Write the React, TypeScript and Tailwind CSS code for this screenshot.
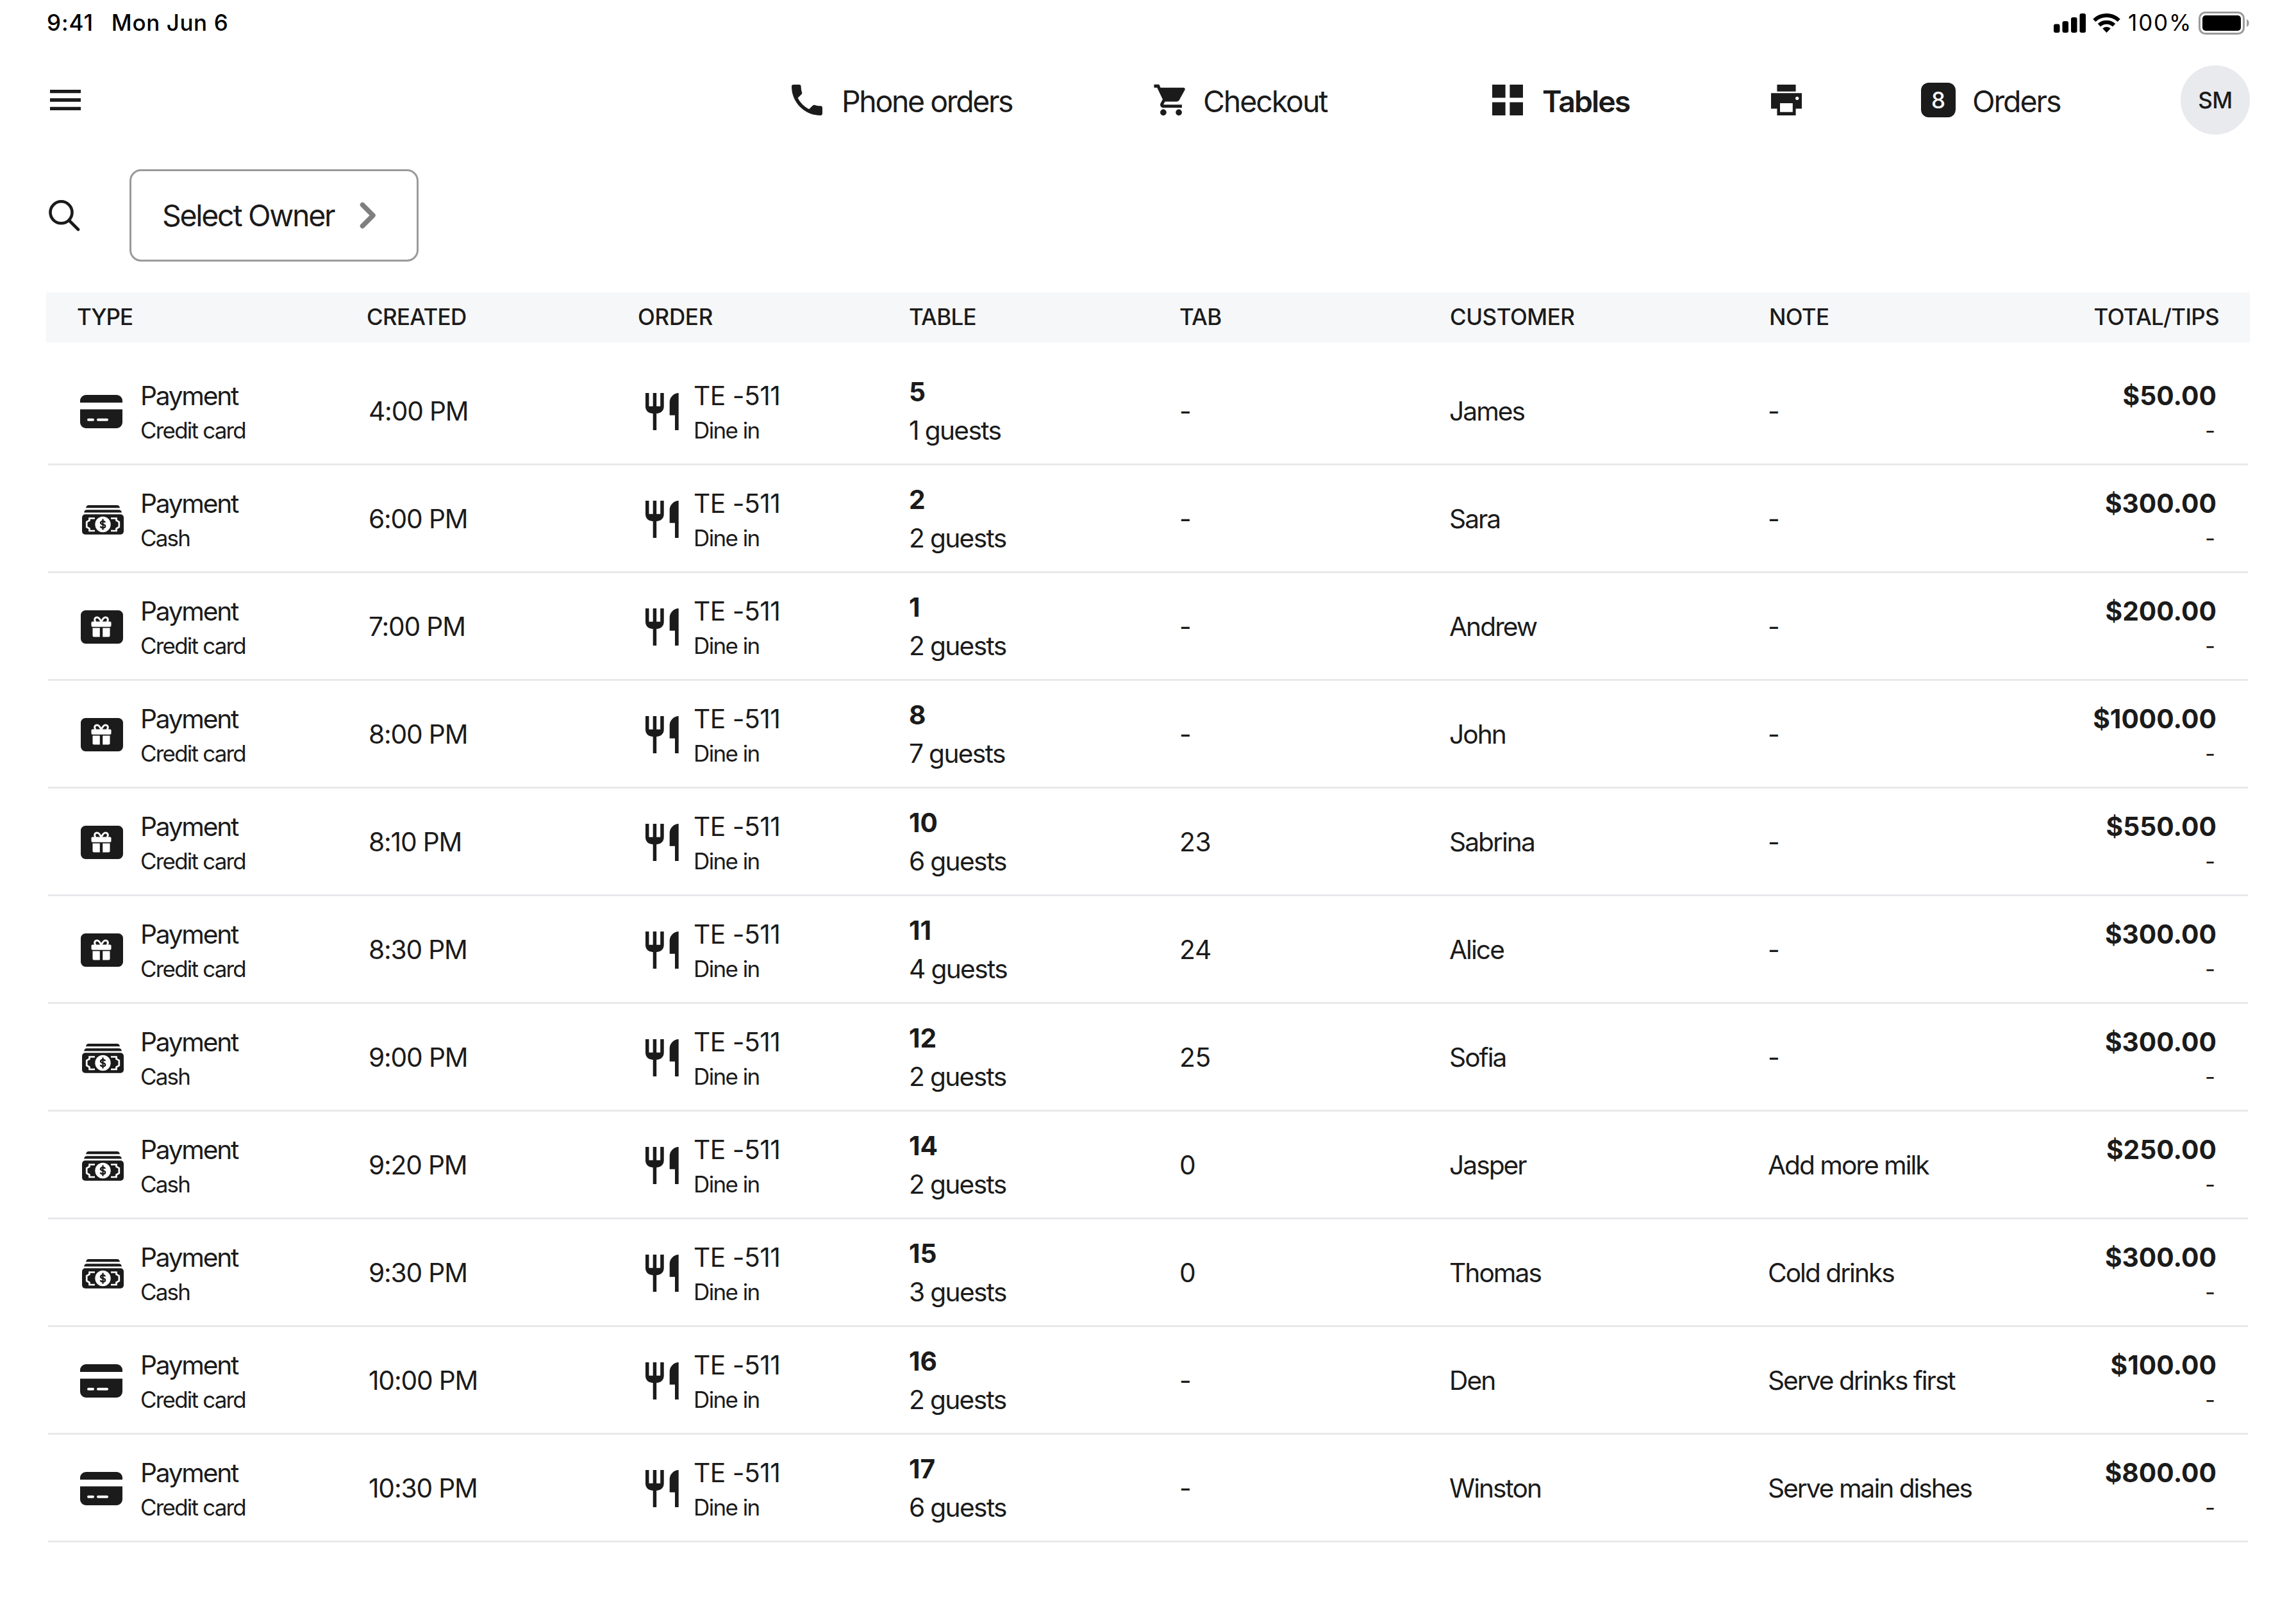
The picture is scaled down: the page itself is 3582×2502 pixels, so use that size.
import React from "react";
import { MdPhone, MdShoppingCart, MdMenu } from "react-icons/md";

type Kind = "card" | "cash" | "gift";

type Row = {
  kind: Kind;
  method: string;
  time: string;
  table: string;
  guests: string;
  tab: string;
  customer: string;
  note: string;
  total: string;
};

const rows: Row[] = [
  { kind: "card", method: "Credit card", time: "4:00 PM", table: "5", guests: "1 guests", tab: "-", customer: "James", note: "-", total: "$50.00" },
  { kind: "cash", method: "Cash", time: "6:00 PM", table: "2", guests: "2 guests", tab: "-", customer: "Sara", note: "-", total: "$300.00" },
  { kind: "gift", method: "Credit card", time: "7:00 PM", table: "1", guests: "2 guests", tab: "-", customer: "Andrew", note: "-", total: "$200.00" },
  { kind: "gift", method: "Credit card", time: "8:00 PM", table: "8", guests: "7 guests", tab: "-", customer: "John", note: "-", total: "$1000.00" },
  { kind: "gift", method: "Credit card", time: "8:10 PM", table: "10", guests: "6 guests", tab: "23", customer: "Sabrina", note: "-", total: "$550.00" },
  { kind: "gift", method: "Credit card", time: "8:30 PM", table: "11", guests: "4 guests", tab: "24", customer: "Alice", note: "-", total: "$300.00" },
  { kind: "cash", method: "Cash", time: "9:00 PM", table: "12", guests: "2 guests", tab: "25", customer: "Sofia", note: "-", total: "$300.00" },
  { kind: "cash", method: "Cash", time: "9:20 PM", table: "14", guests: "2 guests", tab: "0", customer: "Jasper", note: "Add more milk", total: "$250.00" },
  { kind: "cash", method: "Cash", time: "9:30 PM", table: "15", guests: "3 guests", tab: "0", customer: "Thomas", note: "Cold drinks", total: "$300.00" },
  { kind: "card", method: "Credit card", time: "10:00 PM", table: "16", guests: "2 guests", tab: "-", customer: "Den", note: "Serve drinks first", total: "$100.00" },
  { kind: "card", method: "Credit card", time: "10:30 PM", table: "17", guests: "6 guests", tab: "-", customer: "Winston", note: "Serve main dishes", total: "$800.00" },
];

function CardIcon() {
  return (
    <svg className="ml-[50px] h-[52px] w-[66px]" viewBox="0 0 66 52" fill="currentColor">
      <path d="M0 12V9a9 9 0 0 1 9-9h48a9 9 0 0 1 9 9v3z" />
      <path fillRule="evenodd" d="M0 22.5h66V43a9 9 0 0 1-9 9H9a9 9 0 0 1-9-9zM13 36.8a2 2 0 0 0 0 4h7a2 2 0 0 0 0-4zm15 0a2 2 0 0 0 0 4h14a2 2 0 0 0 0-4z" />
    </svg>
  );
}

function CashIcon() {
  return (
    <svg className="ml-[53px] h-[46px] w-[65px] translate-y-[1px]" viewBox="0 0 65 46" fill="currentColor">
      <path d="M6 4.300C6.500 1.500 8 0 10.500 0h44C57 0 58.500 1.500 59 4.300z" />
      <path d="M3 11.500C3.500 8.700 5 7.200 7.500 7.200h50C60 7.200 61.500 8.700 62 11.500z" />
      <rect y="14.300" width="65" height="31.500" rx="5" />
      <circle cx="32.500" cy="30" r="12.200" fill="#fff" />
      <g fill="none" stroke="#fff" strokeWidth="2.700">
        <path d="M20 20.500h-8.500v3.200l-4.300 2.500v7.800l4.300 2.500v3.500H20" />
        <path d="M45 20.500h8.500v3.200l4.300 2.500v7.800l-4.300 2.500v3.500H45" />
      </g>
      <path d="M32.500 21.500v17M36 27.200c-.5-1.500-1.800-2.200-3.500-2.200-2 0-3.600 1-3.600 2.600 0 3.800 7.300 1.500 7.300 5.200 0 1.600-1.600 2.600-3.700 2.600-1.900 0-3.300-.9-3.800-2.500" fill="none" stroke="currentColor" strokeWidth="2.300" />
    </svg>
  );
}

function GiftIcon() {
  return (
    <svg className="ml-[51px] h-[52px] w-[66px]" viewBox="0 0 66 52" fill="currentColor">
      <rect width="66" height="52" rx="7.500" />
      <g fill="#fff">
        <rect x="16.500" y="17.500" width="31" height="8.300" rx="1.800" />
        <path d="M18.500 27.500h11.300v14h-9.300a2 2 0 0 1-2-2z" />
        <path d="M34.200 27.500h11.300v12a2 2 0 0 1-2 2h-9.300z" />
      </g>
      <path d="M23 18c-3-4-.500-7 2.500-7 3.500 0 5 4 6.500 7 1.500-3 3-7 6.500-7 3 0 5.500 3 2.500 7" fill="none" stroke="#fff" strokeWidth="2.900" />
    </svg>
  );
}

function PaymentIcon({ kind }: { kind: Kind }) {
  if (kind === "card") return <CardIcon />;
  if (kind === "cash") return <CashIcon />;
  return <GiftIcon />;
}

function ForkKnifeIcon() {
  return (
    <svg className="h-[58px] w-[52px]" viewBox="0 0 52 58" fill="currentColor">
      <path d="M0 0h5.500v20.700h6.200V0h5.500v20.700h6V0h5.500v21c0 6.500-4.500 10.800-11.500 11v26h-5.500V32C4.500 31.800 0 27.500 0 21z" />
      <path d="M51.700 0v58H46V34.700h-8.300V14C37.700 7 44 0 51.700 0z" />
    </svg>
  );
}

function StatusBar() {
  return (
    <div className="flex h-[72px] items-start justify-between pr-[72px] pl-[73px] text-[35px] leading-[44px] font-medium text-black">
      <div className="flex gap-[28px] pt-[13px]">
        <span className="tracking-[0.9px]">9:41</span>
        <span className="tracking-[0.6px]">Mon Jun 6</span>
      </div>
      <div className="flex pt-[13px]">
        <svg className="mt-[8px] h-[30px] w-[50px]" viewBox="0 0 50 30">
          <rect x="0" y="16.500" width="9.500" height="13.500" rx="3" />
          <rect x="13.500" y="12" width="9.500" height="18" rx="3" />
          <rect x="27" y="6" width="9.500" height="24" rx="3" />
          <rect x="40.500" y="0" width="9.500" height="30" rx="3" />
        </svg>
        <svg className="mt-[8px] ml-[11px] h-[30px] w-[43px]" viewBox="0 0 43 30">
          <g fill="none" stroke="#000" strokeWidth="6">
            <path d="M2.300 10.800a27.500 27.500 0 0 1 38.400 0" />
            <path d="M9.800 18.300a17 17 0 0 1 23.400 0" />
          </g>
          <path d="M21.500 30l-6.200-6.400a9 9 0 0 1 12.400 0z" />
        </svg>
        <span className="ml-[12px] w-[99px] font-normal tracking-[1.9px]">100%</span>
        <svg className="mt-[5px] ml-[11px] h-[36px] w-[80px]" viewBox="0 0 80 36">
          <rect x="1.500" y="1.500" width="69" height="33" rx="9" fill="none" stroke="#9b9b9b" strokeWidth="3" />
          <rect x="6" y="6" width="60" height="24" rx="5" />
          <path d="M75 12c5 1.500 5 10.500 0 12z" fill="#a0a0a0" />
        </svg>
      </div>
    </div>
  );
}

function TopNav() {
  return (
    <header className="flex h-[168px] py-[30px] text-[46.5px] leading-[108px]">
      <div className="flex w-[1235px] shrink-0 items-center pl-[70px]">
        <MdMenu className="size-[64px]" />
      </div>
      <div className="flex w-[565px] shrink-0 items-center">
        <MdPhone className="-ml-[8px] size-[64px]" />
        <span className="ml-[22px] pt-[3px] tracking-[-2.4px]">Phone orders</span>
      </div>
      <div className="flex w-[528px] shrink-0 items-center">
        <MdShoppingCart className="-ml-[2px] size-[58px]" />
        <span className="ml-[21px] pt-[3px] tracking-[-2.1px]">Checkout</span>
      </div>
      <div className="flex w-[435px] shrink-0 items-center">
        <svg className="size-[48px]" viewBox="0 0 48 48" fill="currentColor">
          <path d="M0 0h20.600v20.600H0zM27.400 0H48v20.600H27.400zM0 27.400h20.600V48H0zM27.400 27.400H48V48H27.400z" />
        </svg>
        <span className="ml-[30px] pt-[3px] font-semibold tracking-[-2px]">Tables</span>
      </div>
      <div className="flex w-[234px] shrink-0 items-center">
        <svg className="size-[48px]" viewBox="0 0 48 48" fill="currentColor">
          <path d="M9.400 0h29.200v10.700H9.400z" />
          <path fillRule="evenodd" d="M0 13.300h48v24.200h-9.400V48H9.400V37.500H0zM14 29v13.700h19.800V29zM40.700 18.700a2.700 2.700 0 1 0 .01 0z" />
        </svg>
      </div>
      <div className="flex w-[405px] shrink-0 items-center">
        <span className="flex size-[54px] items-center justify-center rounded-[12px] bg-[#1b1b1b] text-[35px] leading-none font-medium text-white">8</span>
        <span className="ml-[26px] pt-[3px] tracking-[-2.1px]">Orders</span>
      </div>
      <div className="flex size-[108px] shrink-0 items-center justify-center rounded-full bg-[#e9eaee] text-[35px] leading-none font-medium tracking-[-0.5px]">
        SM
      </div>
    </header>
  );
}

function Filters() {
  return (
    <div className="flex h-[216px] pt-[24px]">
      <div className="flex h-[144px] w-[202px] items-center pl-[76px]">
        <svg className="size-[49px]" viewBox="0 0 49 49" fill="none" stroke="currentColor" strokeWidth="4.600" strokeLinecap="round">
          <circle cx="19.500" cy="19.300" r="17" />
          <path d="M32 32L46 46" />
        </svg>
      </div>
      <button className="flex h-[144px] w-[451px] items-center rounded-[18px] border-[3px] border-[#9a9a9a] pl-[48px] text-[46.5px]">
        <span className="w-[270px] pt-[2px] text-left tracking-[-2.3px] whitespace-nowrap">Select Owner</span>
        <svg className="ml-[38px] h-[42px] w-[26px]" viewBox="0 0 26 42" fill="none" stroke="#7f7f7f" strokeWidth="7.500" strokeLinecap="round" strokeLinejoin="round">
          <path d="M4.500 4.500L21 21L4.500 37.500" />
        </svg>
      </button>
    </div>
  );
}

export default function App() {
  return (
    <div className="h-[2502px] w-[3582px] overflow-hidden bg-white font-[Inter,sans-serif] text-[#1b1b1b]">
      <StatusBar />
      <TopNav />
      <Filters />
      <div className="ml-[72px] w-[3438px]">
        <div className="grid h-[78px] grid-cols-[452px_423px_423px_422px_422px_498px_1fr] items-center bg-[#f6f7f9] pr-[48px] pb-[2px] pl-[48px] text-[35px] leading-[44px] font-medium tracking-[-0.7px]">
          <span className="tracking-[-1.1px]">TYPE</span>
          <span>CREATED</span>
          <span className="tracking-[-0.3px]">ORDER</span>
          <span>TABLE</span>
          <span>TAB</span>
          <span className="tracking-[-0.5px]">CUSTOMER</span>
          <span className="flex justify-between">
            <span>NOTE</span>
            <span>TOTAL/TIPS</span>
          </span>
        </div>
        <div className="mx-[3px] mt-[24px]">
          {rows.map((r, i) => (
            <div
              key={i}
              className="grid h-[168px] grid-cols-[500px_432px_411px_422px_421px_497px_1fr] border-b-[3px] border-[#e9e9ec] pt-[3px] text-[40.75px] leading-[50px]"
            >
              <div className="flex items-center">
                <div className="flex w-[144px] shrink-0">
                  <PaymentIcon kind={r.kind} />
                </div>
                <div className="pt-[1px]">
                  <div className="tracking-[-2.3px]">Payment</div>
                  <div className="mt-[6px] text-[35px] leading-[44px] tracking-[-1.8px]">{r.method}</div>
                </div>
              </div>
              <div className="flex items-center tracking-[-1.2px]">{r.time}</div>
              <div className="flex items-center">
                <div className="w-[75px] shrink-0">
                  <ForkKnifeIcon />
                </div>
                <div className="pt-[1px]">
                  <div className="tracking-[-0.5px]">TE -511</div>
                  <div className="mt-[6px] text-[35px] leading-[44px] tracking-[-1.6px]">Dine in</div>
                </div>
              </div>
              <div className="pt-[26px]">
                <div className="font-bold">{r.table}</div>
                <div className="mt-[10px] tracking-[-1.7px]">{r.guests}</div>
              </div>
              <div className="flex items-center tracking-[-0.3px]">{r.tab}</div>
              <div className="flex items-center tracking-[-2px]">{r.customer}</div>
              <div className="flex items-center justify-between pr-[49px]">
                <span className="tracking-[-2.050px]">{r.note}</span>
                <div className="pt-[1px] text-right">
                  <div className="font-bold">{r.total}</div>
                  <div className="mt-[6px] pr-[2px] text-[35px] leading-[44px]">-</div>
                </div>
              </div>
            </div>
          ))}
        </div>
      </div>
    </div>
  );
}
